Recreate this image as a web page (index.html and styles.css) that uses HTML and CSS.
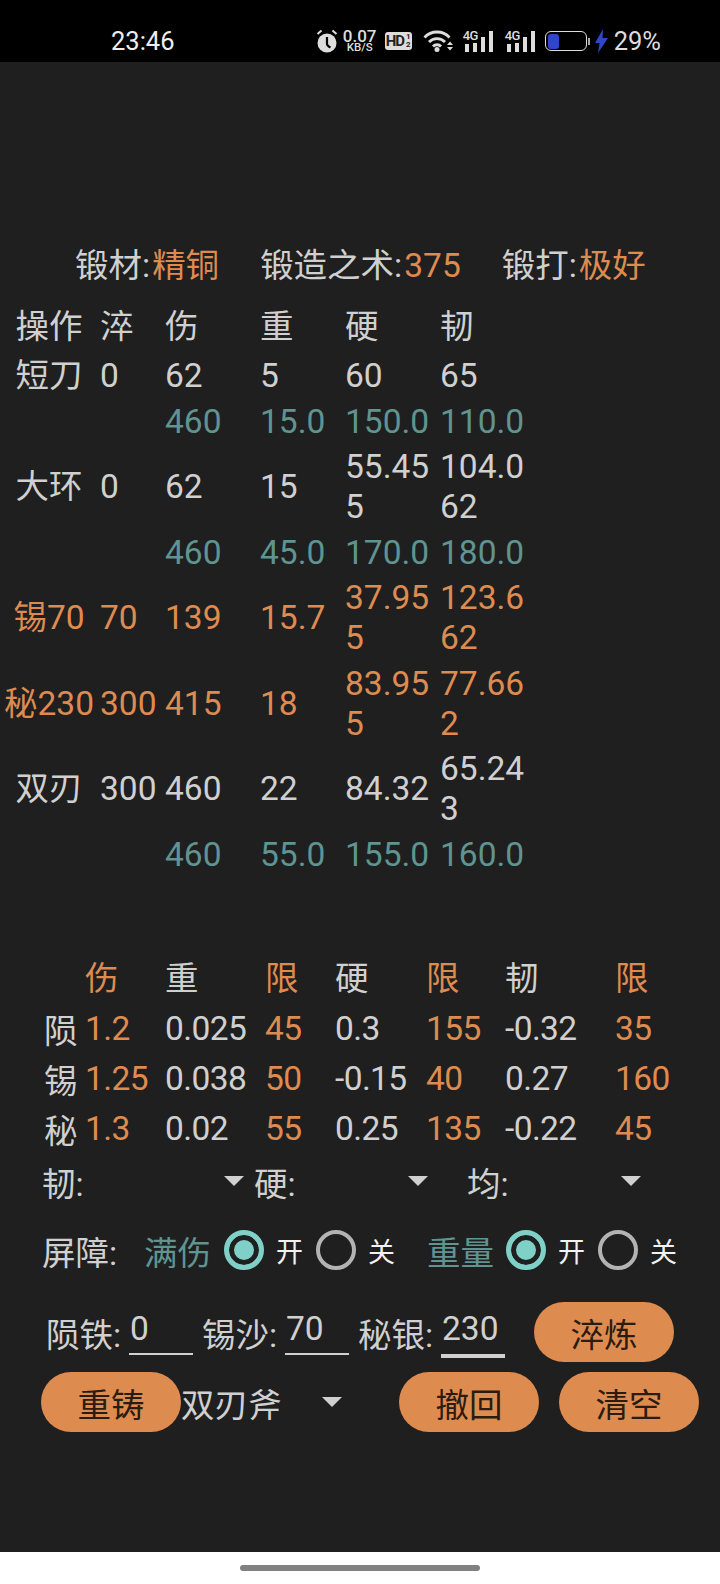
FILE: index.html
```html
<!DOCTYPE html>
<html lang="zh-CN">
<head>
    <meta charset="UTF-8">
    <title>锻造</title>
    <link rel="stylesheet" href="styles.css">
</head>
<body>
    <div class="status-bar">
        <span class="clock">23:46</span>
        <div class="status-icons">
            <svg class="alarm" width="22" height="24" viewBox="0 0 22 24">
                <circle cx="11" cy="14" r="9.5" fill="#ddd"/>
                <path d="M11 8v7c0 1.500 1.500 2.500 3.500 3.500" fill="none" stroke="#000" stroke-width="2.200"/>
                <path d="M1.500 5l4-3.500M20.500 5l-4-3.500" stroke="#ddd" stroke-width="2"/>
            </svg>
            <div class="speed"><span>0.07</span><span class="speed-unit">KB/S</span></div>
            <div class="hd">HD<span class="hd-sub">1<br>2</span></div>
            <svg class="wifi" width="31" height="22" viewBox="0 0 31 22">
                <path d="M1.500 7.500a17 17 0 0 1 25 0M6 12a11 11 0 0 1 16 0M10 16.500a5.500 5.500 0 0 1 8 0" fill="none" stroke="#ddd" stroke-width="2.800"/>
                <circle cx="14" cy="19.500" r="2.500" fill="#ddd"/>
                <path d="M24 15l3-3.500 3 3.500zM24 17l3 3.500 3-3.500z" fill="#ddd"/>
            </svg>
            <div class="signal"><span class="signal-label">4G</span><i class="b1"></i><i class="b2"></i><i class="b3"></i><i class="b4"></i></div>
            <div class="signal second"><span class="signal-label">4G</span><i class="b1"></i><i class="b2"></i><i class="b3"></i><i class="b4"></i></div>
            <div class="battery"><div class="battery-level"></div></div>
            <div class="battery-tip"></div>
            <svg class="bolt" width="13" height="24" viewBox="0 0 13 24"><path d="M8 0L0 14h4.500L3 24l10-15H7.500z" fill="#2f46c8"/></svg>
            <span class="percent">29%</span>
        </div>
    </div>

    <div class="page">
        <div class="forge-info">
            <div>锻材:<span class="orange value">精铜</span></div>
            <div>锻造之术:<span class="orange value">375</span></div>
            <div>锻打:<span class="orange value">极好</span></div>
        </div>

        <div class="table">
            <div class="row head"><div class="name">操作</div><div>淬</div><div>伤</div><div>重</div><div>硬</div><div>韧</div></div>
            <div class="row"><div class="name">短刀</div><div>0</div><div>62</div><div>5</div><div>60</div><div>65</div></div>
            <div class="row teal"><div class="name"></div><div></div><div>460</div><div>15.0</div><div>150.0</div><div>110.0</div></div>
            <div class="row"><div class="name">大环</div><div>0</div><div>62</div><div>15</div><div>55.455</div><div>104.062</div></div>
            <div class="row teal"><div class="name"></div><div></div><div>460</div><div>45.0</div><div>170.0</div><div>180.0</div></div>
            <div class="row orange"><div class="name">锡70</div><div>70</div><div>139</div><div>15.7</div><div>37.955</div><div>123.662</div></div>
            <div class="row orange"><div class="name">秘230</div><div>300</div><div>415</div><div>18</div><div>83.955</div><div>77.662</div></div>
            <div class="row"><div class="name">双刃</div><div>300</div><div>460</div><div>22</div><div>84.32</div><div>65.243</div></div>
            <div class="row teal"><div class="name"></div><div></div><div>460</div><div>55.0</div><div>155.0</div><div>160.0</div></div>
        </div>

        <div class="limits">
            <div></div><div class="orange">伤</div><div>重</div><div class="orange">限</div><div>硬</div><div class="orange">限</div><div>韧</div><div class="orange">限</div>
            <div>陨</div><div class="orange">1.2</div><div>0.025</div><div class="orange">45</div><div>0.3</div><div class="orange">155</div><div>-0.32</div><div class="orange">35</div>
            <div>锡</div><div class="orange">1.25</div><div>0.038</div><div class="orange">50</div><div>-0.15</div><div class="orange">40</div><div>0.27</div><div class="orange">160</div>
            <div>秘</div><div class="orange">1.3</div><div>0.02</div><div class="orange">55</div><div>0.25</div><div class="orange">135</div><div>-0.22</div><div class="orange">45</div>
        </div>

        <div class="selects">
            <div class="select s-ren"><span>韧:</span><i class="arrow"></i></div>
            <div class="select s-ying"><span>硬:</span><i class="arrow"></i></div>
            <div class="select s-jun"><span>均:</span><i class="arrow"></i></div>
        </div>

        <div class="barrier">
            <span class="barrier-label">屏障:</span>
            <span class="teal option-name">满伤</span>
            <i class="radio on"></i><span class="radio-text">开</span>
            <i class="radio"></i><span class="radio-text">关</span>
            <span class="teal option-name second">重量</span>
            <i class="radio on"></i><span class="radio-text">开</span>
            <i class="radio"></i><span class="radio-text">关</span>
        </div>

        <div class="materials">
            <span class="mat-label">陨铁:</span><span class="field">0</span>
            <span class="mat-label">锡沙:</span><span class="field">70</span>
            <span class="mat-label">秘银:</span><span class="field active">230</span>
            <button class="btn quench">淬炼</button>
        </div>

        <div class="actions">
            <button class="btn">重铸</button>
            <div class="weapon"><span>双刃斧</span><i class="arrow"></i></div>
            <button class="btn undo">撤回</button>
            <button class="btn clear">清空</button>
        </div>
    </div>

    <div class="nav-bar"><div class="nav-pill"></div></div>
</body>
</html>
```
FILE: styles.css
```css
* {
    box-sizing: border-box;
}

body {
    margin: 0;
    width: 720px;
    height: 1584px;
    display: flex;
    flex-direction: column;
    background-color: #1f1f1f;
    color: #d0d0d0;
    font-family: Roboto, "Noto Sans CJK SC", sans-serif;
    font-size: 33.500px;
    overflow: hidden;
}

.orange {
    color: #de8b50;
}

.teal {
    color: #5f9491;
}

/* status bar */
.status-bar {
    height: 62px;
    background-color: #000;
    display: flex;
    align-items: center;
    justify-content: space-between;
    padding: 20px 59px 0 111px;
    flex-shrink: 0;
}

.clock {
    font-size: 25.500px;
    color: #eee;
}

.status-icons {
    display: flex;
    align-items: center;
    color: #ddd;
}

.speed {
    display: flex;
    flex-direction: column;
    align-items: center;
    width: 34px;
    margin-left: 5px;
    font-size: 17px;
    font-weight: 500;
    line-height: 12px;
}

.speed-unit {
    font-size: 11.500px;
    line-height: 10px;
}

.hd {
    display: flex;
    align-items: center;
    justify-content: center;
    width: 27px;
    height: 18px;
    margin-left: 8px;
    background-color: #ddd;
    border-radius: 3px;
    color: #222;
    font-size: 15px;
    font-weight: 700;
    letter-spacing: -1px;
}

.hd-sub {
    font-size: 8px;
    line-height: 8px;
    margin-left: 2px;
    letter-spacing: 0;
}

.wifi {
    margin-left: 11px;
}

.signal {
    position: relative;
    display: flex;
    align-items: flex-end;
    gap: 4px;
    width: 30px;
    height: 22px;
    margin-left: 9px;
    padding-left: 2px;
}

.signal.second {
    margin-left: 12px;
}

.signal i {
    width: 4px;
    background-color: #ddd;
}

.signal .b1 { height: 8px; }
.signal .b2 { height: 9px; }
.signal .b3 { height: 15px; }
.signal .b4 { height: 21px; }

.signal-label {
    position: absolute;
    left: 0;
    top: 0;
    font-size: 13px;
    line-height: 11px;
    font-weight: 500;
    letter-spacing: -0.500px;
}

.battery {
    width: 42px;
    height: 20px;
    margin-left: 10px;
    border: 1.500px solid #ddd;
    border-radius: 6px;
    padding: 1.500px 2px;
}

.battery-level {
    width: 11px;
    height: 100%;
    background-color: #2f46c8;
    border-radius: 3px;
}

.battery-tip {
    width: 2px;
    height: 7px;
    margin-left: 1px;
    background-color: #aaa;
}

.bolt {
    margin-left: 5px;
}

.percent {
    font-size: 25.500px;
    margin-left: 6px;
}

/* page */
.page {
    flex: 1;
    padding-top: 177px;
}

.forge-info {
    display: flex;
    height: 46px;
    align-items: center;
    padding-left: 75px;
    gap: 41px;
}

.value {
    margin-left: 2px;
}

.table {
    margin-top: 18.500px;
}

.row {
    display: grid;
    grid-template-columns: 100px 65px 95px 85px 95px 95px;
    align-items: center;
    min-height: 45.500px;
    line-height: 40px;
    padding: 2.750px 0;
}

.row > div {
    padding-right: 8px;
    word-break: break-all;
}

.row .name {
    padding-right: 2px;
    text-align: center;
    white-space: nowrap;
}

.row.head {
    min-height: 50px;
    padding-bottom: 6px;
}

.limits {
    display: grid;
    grid-template-columns: 85px 80px 100px 70px 91px 79px 110px 1fr;
    grid-template-rows: 55px;
    grid-auto-rows: 50px;
    align-items: center;
    margin-top: 70.500px;
    letter-spacing: -0.600px;
}

.limits > div:nth-child(8n+1) {
    text-align: right;
    padding-right: 8px;
}

.selects {
    display: flex;
    height: 52px;
    align-items: center;
    margin-top: 2px;
}

.select {
    display: flex;
    align-items: center;
    justify-content: space-between;
}

.s-ren {
    width: 202px;
    margin-left: 42px;
    margin-right: 10px;
}

.s-ying {
    width: 174px;
    margin-right: 39px;
}

.s-jun {
    width: 174px;
}

.arrow {
    width: 0;
    height: 0;
    border-left: 10px solid transparent;
    border-right: 10px solid transparent;
    border-top: 10px solid #d0d0d0;
}

.barrier {
    display: flex;
    align-items: center;
    height: 60px;
    margin-top: 13px;
    padding-left: 42px;
}

.barrier-label {
    width: 103px;
}

.option-name {
    width: 80px;
    margin-left: -1px;
}

.option-name.second {
    width: 79px;
    margin-left: 19px;
}

.radio {
    width: 40px;
    height: 40px;
    margin-right: 12px;
    border: 4px solid #b3b3b3;
    border-radius: 50%;
}

.radio.on {
    border: 5px solid #7fd0c6;
    background-color: #7fd0c6;
    box-shadow: inset 0 0 0 5px #1f1f1f;
}

.radio-text {
    width: 40px;
    font-size: 27px;
    color: #f2f2f2;
}

.materials {
    display: flex;
    align-items: center;
    height: 60px;
    margin-top: 22px;
    padding-left: 46px;
}

.mat-label {
    width: 83px;
    white-space: nowrap;
}

.field {
    align-self: flex-start;
    width: 64px;
    height: 50px;
    margin-top: 3px;
    margin-right: 9px;
    padding-left: 1px;
    line-height: 48px;
    border-bottom: 2px solid #d0d0d0;
}

.field.active {
    height: 53px;
    border-bottom-width: 4px;
}

.btn {
    width: 140px;
    height: 60px;
    padding: 0;
    border: none;
    border-radius: 30px;
    background-color: #de8b50;
    color: #2a1c10;
    font-family: inherit;
    font-size: 33.500px;
}

.quench {
    margin-left: 20px;
}

.actions {
    display: flex;
    align-items: center;
    margin-top: 10px;
    padding-left: 41px;
}

.weapon {
    display: flex;
    align-items: center;
    justify-content: space-between;
    width: 161px;
}

.undo {
    margin-left: 57px;
}

.clear {
    margin-left: 20px;
}

.nav-bar {
    height: 32px;
    flex-shrink: 0;
    background-color: #fff;
    display: flex;
    justify-content: center;
    align-items: center;
}

.nav-pill {
    width: 240px;
    height: 6px;
    border-radius: 3px;
    background-color: #808080;
}
```
